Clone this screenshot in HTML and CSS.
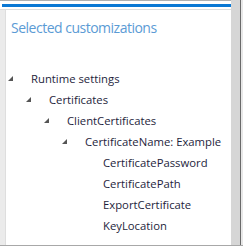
FILE: index.html
```html
<!DOCTYPE html>
<html>
<head>
<meta charset="utf-8">
<link rel="stylesheet" href="styles.css">
</head>
<body>
<div class="window">
  <div class="main">
    <div class="topline"></div>
    <div class="accent"></div>
    <div class="body">
      <div class="strip"></div>
      <div class="content">
        <h1 class="title">Selected customizations</h1>
        <ul class="tree">
          <li class="row l0"><svg class="tri" viewBox="0 0 6 6"><path d="M6 0 L6 6 L0 6 Z"/></svg><span>Runtime settings</span></li>
          <li class="row l1"><svg class="tri" viewBox="0 0 6 6"><path d="M6 0 L6 6 L0 6 Z"/></svg><span>Certificates</span></li>
          <li class="row l2"><svg class="tri" viewBox="0 0 6 6"><path d="M6 0 L6 6 L0 6 Z"/></svg><span>ClientCertificates</span></li>
          <li class="row l3"><svg class="tri" viewBox="0 0 6 6"><path d="M6 0 L6 6 L0 6 Z"/></svg><span>CertificateName: Example</span></li>
          <li class="row l4"><span>CertificatePassword</span></li>
          <li class="row l4"><span>CertificatePath</span></li>
          <li class="row l4"><span>ExportCertificate</span></li>
          <li class="row l4"><span>KeyLocation</span></li>
        </ul>
      </div>
    </div>
  </div>
  <div class="scroll"></div>
  <div class="edge"></div>
  <div class="outer"></div>
</div>
</body>
</html>
```
FILE: styles.css
```css
html, body {
  margin: 0;
  padding: 0;
  background: #ffffff;
}
.window {
  display: flex;
  width: 243px;
  height: 246px;
  box-sizing: border-box;
  border-bottom: 1px solid #a8a8a8;
  overflow: hidden;
}
.main {
  width: 231px;
  display: flex;
  flex-direction: column;
  background: #ffffff;
}
.topline {
  height: 1px;
  background: #b0b0b0;
}
.accent {
  height: 3px;
  margin: 3px 0 2px 2px;
  background: #0a78d4;
}
.body {
  flex: 1;
  display: flex;
  border-top: 1px solid #dcdcdc;
}
.strip {
  width: 5px;
  background: #ebebeb;
  border-right: 1px solid #dedede;
}
.content {
  flex: 1;
  font-family: "Open Sans", "Noto Sans", sans-serif;
}
.title {
  margin: 8px 0 0 5px;
  font-size: 14px;
  font-weight: 400;
  color: #5b9bd5;
  letter-spacing: -0.5px;
  line-height: 20px;
}
.tree {
  list-style: none;
  margin: 30px 0 0 0;
  padding: 0;
}
.row {
  display: flex;
  align-items: center;
  height: 21px;
  font-size: 11.3px;
  color: #1e1e3c;
  white-space: nowrap;
}
.tri {
  width: 5px;
  height: 5px;
  fill: #555555;
  margin-right: 18px;
}
.l0 { padding-left: 2px; }
.l1 { padding-left: 20px; }
.l2 { padding-left: 38px; }
.l3 { padding-left: 56px; }
.l4 { padding-left: 97px; }
.scroll {
  width: 9px;
  background: #d6d6d6;
}
.edge {
  width: 1px;
  background: #6a6a6a;
}
.outer {
  width: 2px;
  background: #e8e8e8;
}
```
